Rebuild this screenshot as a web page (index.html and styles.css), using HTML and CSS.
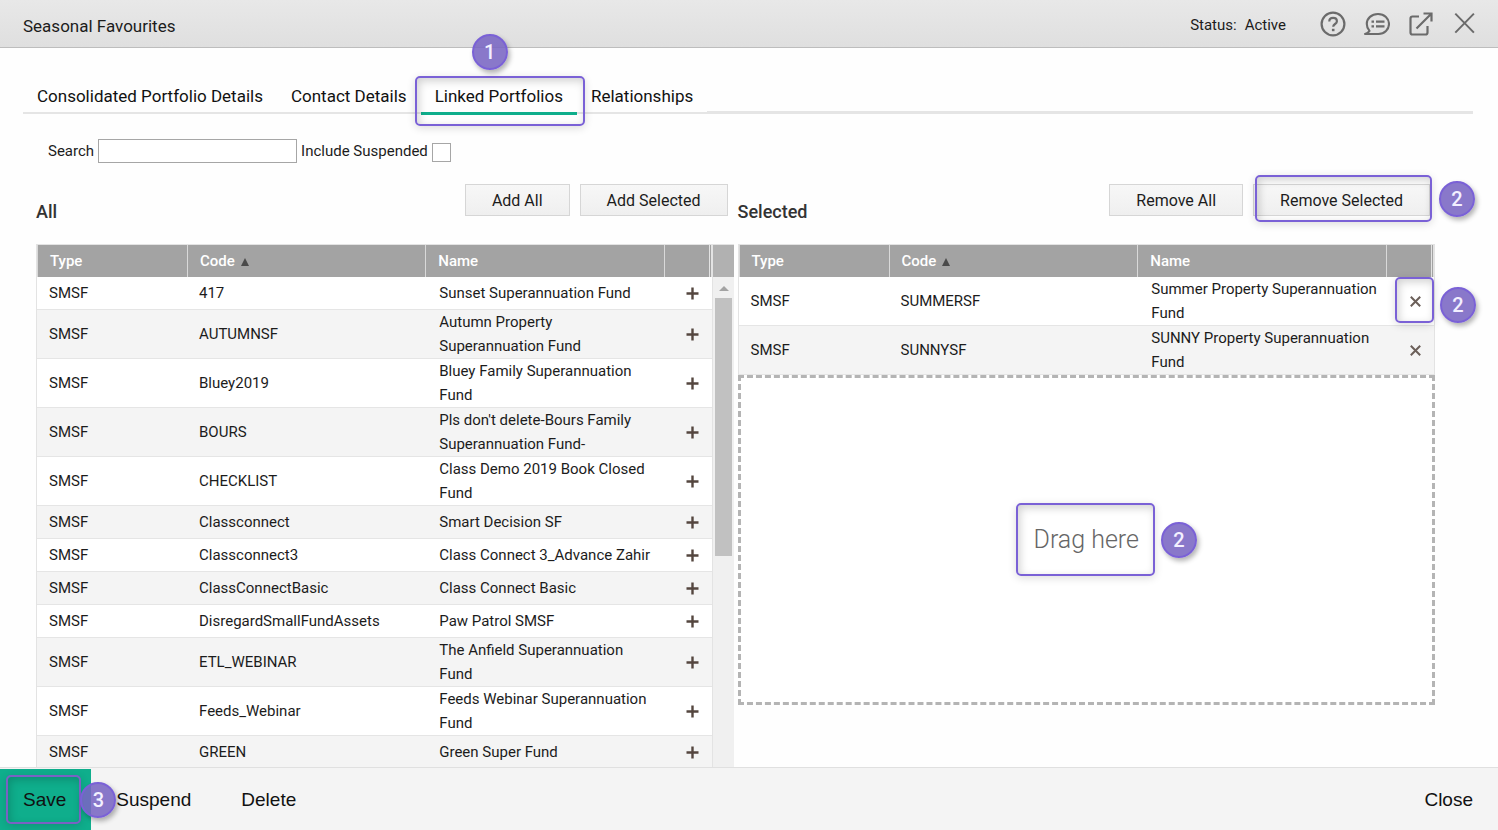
FILE: index.html
```html
<!DOCTYPE html>
<html lang="en">
<head>
<meta charset="utf-8">
<title>Seasonal Favourites</title>
<link rel="stylesheet" href="styles.css">
</head>
<body>
<svg class="sprite" aria-hidden="true">
  <symbol id="plus" viewBox="0 0 13 13"><path d="M6.5 0.5v12M0.5 6.5h12" stroke="#54463f" stroke-width="2.4"/></symbol>
  <symbol id="cross" viewBox="0 0 13 13"><path d="M1.8 1.8l9.4 9.4M11.2 1.8l-9.4 9.4" stroke="#6b5f59" stroke-width="2"/></symbol>
</svg>
<header class="topbar">
  <h1 class="title">Seasonal Favourites</h1>
  <p class="status"><span>Status:</span><span>Active</span></p>
  <div class="tools">
    <button class="tool" type="button" aria-label="Help"><svg width="26" height="26" viewBox="0 0 26 26" fill="none" stroke="#6b6b6b" stroke-width="2.2"><circle cx="13" cy="13" r="11.4"/><path d="M9.3 10.4c0-2.2 1.6-3.5 3.8-3.5s3.8 1.3 3.8 3.3c0 2.8-3.7 2.8-3.7 5.6"/><path d="M13.2 17.8v2.4" stroke-width="2.6"/></svg></button>
    <button class="tool" type="button" aria-label="Feedback"><svg width="26" height="26" viewBox="0 0 26 26" fill="none" stroke="#6b6b6b" stroke-width="2.1"><path d="M1 23h13.5C20.5 23 25 18.6 25 13S20.500 3 14 3 2.800 7.400 2.800 13c0 2.700 1 5.100 2.700 6.900C4.600 21.400 3 22.600 1 23z" stroke-linejoin="round"/><path d="M7.500 10.600h2.500M12 10.600h8.500M7.500 15.400h2.500M12 15.400h8.500" stroke-width="2.300"/></svg></button>
    <button class="tool" type="button" aria-label="Open in new window"><svg width="26" height="26" viewBox="0 0 26 26" fill="none" stroke="#6b6b6b" stroke-width="2.2"><path d="M11 5.500H4.500a2 2 0 0 0-2 2V21.500a2 2 0 0 0 2 2H17.500a2 2 0 0 0 2-2V15"/><path d="M8.500 17.500L23 3M15.500 2.500h8v8"/></svg></button>
    <button class="tool" type="button" aria-label="Close window"><svg width="26" height="26" viewBox="0 0 26 26" fill="none" stroke="#6b6b6b" stroke-width="2"><path d="M3.300 2.600l18.600 19M21.900 2.600l-18.600 19"/></svg></button>
  </div>
</header>

<main class="content">
  <nav class="tabs">
    <a class="tab" href="#details">Consolidated Portfolio Details</a>
    <a class="tab" href="#contact">Contact Details</a>
    <a class="tab active" href="#linked" aria-current="page">Linked Portfolios<span class="callout callout-tab"></span><span class="badge badge-tab">1</span></a>
    <a class="tab" href="#relationships">Relationships</a>
    <span class="tab-rest"></span>
  </nav>

  <form class="filters">
    <label for="search">Search</label>
    <input class="search" id="search" type="text">
    <label for="suspended">Include Suspended</label>
    <input class="check" id="suspended" type="checkbox">
  </form>

  <div class="lists">
    <section class="list">
      <div class="list-head">
        <h2>All</h2>
        <div class="actions">
          <button class="btn" type="button">Add All</button>
          <button class="btn" type="button">Add Selected</button>
        </div>
      </div>
      <div class="grid">
        <table>
          <colgroup><col class="c-type"><col><col><col class="c-act"></colgroup>
          <thead><tr><th>Type</th><th aria-sort="ascending">Code <span class="sort"></span></th><th>Name</th><th></th></tr></thead>
          <tbody>
            <tr><td>SMSF</td><td>417</td><td>Sunset Superannuation Fund</td><td><button class="row-btn" type="button" aria-label="Add"><svg><use href="#plus"/></svg></button></td></tr>
            <tr><td>SMSF</td><td>AUTUMNSF</td><td>Autumn Property Superannuation Fund</td><td><button class="row-btn" type="button" aria-label="Add"><svg><use href="#plus"/></svg></button></td></tr>
            <tr><td>SMSF</td><td>Bluey2019</td><td>Bluey Family Superannuation Fund</td><td><button class="row-btn" type="button" aria-label="Add"><svg><use href="#plus"/></svg></button></td></tr>
            <tr><td>SMSF</td><td>BOURS</td><td>Pls don't delete-Bours Family Superannuation Fund-</td><td><button class="row-btn" type="button" aria-label="Add"><svg><use href="#plus"/></svg></button></td></tr>
            <tr><td>SMSF</td><td>CHECKLIST</td><td>Class Demo 2019 Book Closed Fund</td><td><button class="row-btn" type="button" aria-label="Add"><svg><use href="#plus"/></svg></button></td></tr>
            <tr><td>SMSF</td><td>Classconnect</td><td>Smart Decision SF</td><td><button class="row-btn" type="button" aria-label="Add"><svg><use href="#plus"/></svg></button></td></tr>
            <tr><td>SMSF</td><td>Classconnect3</td><td>Class Connect 3_Advance Zahir</td><td><button class="row-btn" type="button" aria-label="Add"><svg><use href="#plus"/></svg></button></td></tr>
            <tr><td>SMSF</td><td>ClassConnectBasic</td><td>Class Connect Basic</td><td><button class="row-btn" type="button" aria-label="Add"><svg><use href="#plus"/></svg></button></td></tr>
            <tr><td>SMSF</td><td>DisregardSmallFundAssets</td><td>Paw Patrol SMSF</td><td><button class="row-btn" type="button" aria-label="Add"><svg><use href="#plus"/></svg></button></td></tr>
            <tr><td>SMSF</td><td>ETL_WEBINAR</td><td>The Anfield Superannuation Fund</td><td><button class="row-btn" type="button" aria-label="Add"><svg><use href="#plus"/></svg></button></td></tr>
            <tr><td>SMSF</td><td>Feeds_Webinar</td><td>Feeds Webinar Superannuation Fund</td><td><button class="row-btn" type="button" aria-label="Add"><svg><use href="#plus"/></svg></button></td></tr>
            <tr><td>SMSF</td><td>GREEN</td><td>Green Super Fund</td><td><button class="row-btn" type="button" aria-label="Add"><svg><use href="#plus"/></svg></button></td></tr>
          </tbody>
        </table>
        <div class="scroll" aria-hidden="true">
          <div class="scroll-cap"></div>
          <div class="scroll-up"></div>
          <div class="scroll-thumb"></div>
        </div>
      </div>
    </section>

    <section class="list">
      <div class="list-head">
        <h2>Selected</h2>
        <div class="actions actions-right">
          <button class="btn" type="button">Remove All</button>
          <div class="anchor">
            <button class="btn" type="button">Remove Selected</button>
            <span class="callout callout-remove"></span><span class="badge badge-remove">2</span>
          </div>
        </div>
      </div>
      <div class="grid grid-selected">
        <table>
          <colgroup><col class="c-type"><col><col><col class="c-act"></colgroup>
          <thead><tr><th>Type</th><th aria-sort="ascending">Code <span class="sort"></span></th><th>Name</th><th></th></tr></thead>
          <tbody>
            <tr><td>SMSF</td><td>SUMMERSF</td><td>Summer Property Superannuation Fund</td><td class="anchor"><span class="callout callout-row"></span><span class="badge badge-row">2</span><button class="row-btn" type="button" aria-label="Remove"><svg><use href="#cross"/></svg></button></td></tr>
            <tr><td>SMSF</td><td>SUNNYSF</td><td>SUNNY Property Superannuation Fund</td><td><button class="row-btn" type="button" aria-label="Remove"><svg><use href="#cross"/></svg></button></td></tr>
          </tbody>
        </table>
      </div>
      <div class="drop"><div class="anchor drag">Drag here<span class="callout callout-drag"></span><span class="badge badge-drag">2</span></div></div>
    </section>
  </div>
</main>

<footer class="footer">
  <button class="foot-btn save" type="button">Save<span class="callout callout-save"></span><span class="badge badge-save">3</span></button>
  <button class="foot-btn" type="button">Suspend</button>
  <button class="foot-btn" type="button">Delete</button>
  <button class="foot-btn close" type="button">Close</button>
</footer>
</body>
</html>
```

FILE: styles.css
```css
* { box-sizing: border-box; }

body {
  margin: 0;
  height: 100vh;
  display: flex;
  flex-direction: column;
  overflow: hidden;
  background: #fefefe;
  color: #1c1c1c;
  font: 15px/24px Roboto, "Liberation Sans", sans-serif;
}

button { font: inherit; color: inherit; cursor: pointer; }
.sprite { display: none; }

/* Top bar */
.topbar {
  flex: none;
  display: flex;
  align-items: center;
  height: 48px;
  padding: 2px 20px 0 23px;
  background: linear-gradient(#e8e8e8, #dfdfdf);
  border-bottom: 1px solid #bdbdbd;
}
.title { margin: 0; padding-top: 2px; font-size: 17px; font-weight: 400; }
.status { display: flex; gap: 8px; margin: 0 34px 0 auto; }
.tools { display: flex; gap: 18px; }
.tool { display: flex; padding: 0 0 2px; border: 0; background: none; }

/* Tabs */
.content { flex: 1; min-height: 0; display: flex; flex-direction: column; }
.tabs { flex: none; display: flex; height: 66px; margin: 0 25px 0 23px; padding-top: 36px; }
.tab {
  position: relative;
  padding: 0 14px;
  border-bottom: 2px solid #e5e5e5;
  color: #111;
  font-size: 17px;
  line-height: 24px;
  text-decoration: none;
  white-space: nowrap;
}
.active { z-index: 1; height: 31px; border-bottom: 3px solid #0fae8c; }
.tab-rest { flex: 1; border-bottom: 3px solid #e5e5e5; }

/* Filters */
.filters { flex: none; display: flex; align-items: center; gap: 4px; height: 70px; padding: 4px 48px 0; }
.search { width: 199px; height: 24px; border: 1px solid #a6a6a6; background: #fff; }
.check { appearance: none; width: 19px; height: 19px; margin: 2px 0 0; border: 1px solid #a6a6a6; background: #fff; }

/* Lists */
.lists { flex: 1; min-height: 0; display: grid; grid-template-columns: 1fr 1fr; gap: 4px; padding: 0 63px 0 36px; }
.list { min-width: 0; min-height: 0; display: flex; flex-direction: column; }
.list-head { flex: none; display: flex; justify-content: space-between; height: 60px; }
.list-head h2 { margin: 16px 0 0; font-size: 18px; font-weight: 500; color: #333; }
.actions { display: flex; align-items: flex-start; gap: 10px; padding-right: 6px; }
.actions-right { padding-right: 5px; }
.btn {
  height: 32px;
  padding: 2px 26px 0;
  border: 1px solid #d6d6d6;
  background: linear-gradient(#f7f7f7, #efefef);
  font-size: 16px;
}

.grid { display: flex; min-height: 0; overflow: hidden; border: 1px solid #e3e3e3; border-width: 1px 0 0 1px; background: #fff; }
.grid-selected { flex: none; overflow: visible; border-right-width: 1px; }
table { flex: 1; align-self: flex-start; width: 100%; table-layout: fixed; border-collapse: separate; border-spacing: 0; }
.c-type { width: 150px; }
.c-act { width: 48px; }
th {
  height: 32px;
  padding: 0 12px;
  border-left: 1px solid #d9d9d9;
  background: #a3a3a3;
  color: #fff;
  font-weight: 500;
  text-align: left;
}
th:last-child { border-right: 3px double #e3e3e3; }
td { height: 33px; padding: 0 12px; border-bottom: 1px solid #e5e5e5; }
td:nth-child(3) { padding: 0 8px 0 14px; }
td:last-child { padding: 0 0 0 10px; }
tbody tr:nth-child(even) { background: #f4f4f4; }
.sort {
  display: inline-block;
  margin-left: 2px;
  border: 4px solid transparent;
  border-top: 0;
  border-bottom: 8px solid #4a4a4a;
}
.row-btn { display: flex; margin: 0 auto; padding: 0; border: 0; background: none; }
.row-btn svg { width: 13px; height: 13px; }

.scroll { flex: none; width: 22px; border-left: 1px solid #e3e3e3; background: #f0f0f0; }
.scroll-cap { height: 32px; background: #b1b1b1; }
.scroll-up {
  width: 10px;
  margin: 9px auto 7px 6px;
  border: 5px solid transparent;
  border-top: 0;
  border-bottom-color: #a3a3a3;
}
.scroll-thumb { width: 17px; height: 258px; margin-left: 2px; background: #c1c1c1; }

.drop {
  flex: none;
  display: flex;
  align-items: center;
  justify-content: center;
  height: 330px;
  border: 3px dashed #b4b4b4;
  background: #fff;
}
.anchor { position: relative; }
.drag { color: #666; font-size: 25px; font-weight: 300; }

/* Footer */
.footer {
  flex: none;
  display: flex;
  height: 63px;
  padding-top: 1px;
  border-top: 1px solid #e0e0e0;
  background: #f4f4f4;
  font: 19px/24px "Liberation Sans", Arial, sans-serif;
}
.foot-btn { position: relative; padding: 0 25px; border: 0; background: none; color: #111; }
.save { z-index: 1; padding: 0 25px 0 23px; background: #0fae8c; }
.close { margin-left: auto; }

/* Numbered call-outs */
.callout {
  position: absolute;
  border: 2px solid #7a61d6;
  border-radius: 5px;
  box-shadow: 0 2px 8px rgba(0, 0, 0, .14), inset 2px 3px 8px rgba(0, 0, 0, .18);
  pointer-events: none;
}
.badge {
  position: absolute;
  width: 36px;
  height: 36px;
  border: 2px solid #7a61d6;
  border-radius: 50%;
  background: rgba(121, 101, 195, .88);
  box-shadow: 2px 3px 5px rgba(0, 0, 0, .3);
  color: #f3f0ff;
  font: 500 20px/32px Roboto, sans-serif;
  text-align: center;
  pointer-events: none;
}
.callout-tab { inset: -8px -8px -14px -6px; }
.badge-tab { left: 51px; top: -50px; }
.callout-remove { inset: -9px -2px -6px 2px; }
.badge-remove { right: -45px; top: -3px; }
.callout-row { inset: 0 0 2px 9px; }
.badge-row { right: -42px; top: 10px; }
.callout-drag { inset: -25px -16px -24px -18px; }
.badge-drag { right: -58px; top: -6px; }
.callout-save { inset: 6px 10px 6px 6px; border-color: #7a61c4; }
.badge-save { right: -25px; top: 13px; }
```
